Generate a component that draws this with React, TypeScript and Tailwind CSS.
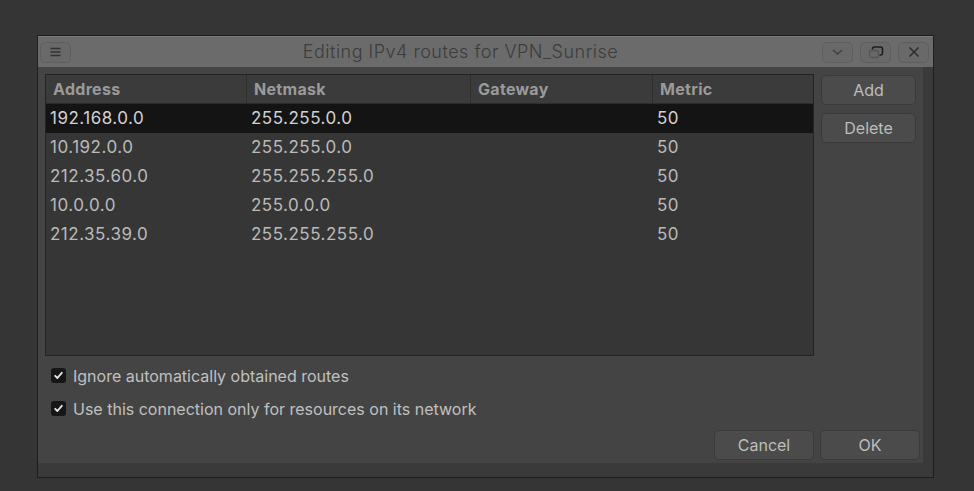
import React from "react";

const rows = [
  ["192.168.0.0", "255.255.0.0", "", "50"],
  ["10.192.0.0", "255.255.0.0", "", "50"],
  ["212.35.60.0", "255.255.255.0", "", "50"],
  ["10.0.0.0", "255.0.0.0", "", "50"],
  ["212.35.39.0", "255.255.255.0", "", "50"],
];

const cols = ["w-[201px]", "w-[224px]", "w-[182px]", "flex-1"];

function Check() {
  return (
    <div className="w-[15px] h-[15px] rounded-[3px] bg-[#161616] flex items-center justify-center">
      <svg width="11" height="11" viewBox="0 0 11 11">
        <path d="M2.2 5.8 L4.4 8 L8.8 2.8" fill="none" stroke="#e8e8e8" strokeWidth="1.8" strokeLinecap="round" strokeLinejoin="round" />
      </svg>
    </div>
  );
}

function Btn({ children, w }: { children: React.ReactNode; w: string }) {
  return (
    <div className={`${w} h-[30px] rounded-[5px] bg-[#4b4b4b] border border-[#3a3a3a] flex items-center justify-center text-[16px] text-[#bdbdbd]`}>
      {children}
    </div>
  );
}

function TBtn({ children }: { children: React.ReactNode }) {
  return (
    <div className="w-[31px] h-[21px] rounded-[5px] border border-[#5e5e5e] bg-[#696969] flex items-center justify-center">
      {children}
    </div>
  );
}

export default function App() {
  return (
    <div
      className="w-[974px] h-[491px] bg-[#353535] pt-[35px] pl-[37px]"
      style={{ fontFamily: "Inter, 'Noto Sans', sans-serif" }}
    >
      <div className="w-[897px] h-[443px] border border-[#1e1e1e] bg-[#3a3a3a] flex flex-col">
        {/* title bar */}
        <div className="h-[31px] bg-[#6b6b6b] border-t border-[#7a7a7a] flex items-center px-[2px] relative">
          <TBtn>
            <svg width="13" height="10" viewBox="0 0 13 10">
              <path d="M1.5 1.5H11.5M1.5 5H11.5M1.5 8.5H11.5" stroke="#333" strokeWidth="1.6" />
            </svg>
          </TBtn>
          <div className="flex-1 text-center text-[18px] tracking-[0.5px] text-[#3c3c3c] -mt-[1px] ml-[28px] font-light">
            Editing IPv4 routes for VPN_Sunrise
          </div>
          <div className="flex gap-[7px] mr-[2px]">
            <TBtn>
              <svg width="13" height="8" viewBox="0 0 13 8">
                <path d="M2 2L6.5 6L11 2" fill="none" stroke="#3e3e3e" strokeWidth="1.4" />
              </svg>
            </TBtn>
            <TBtn>
              <svg width="16" height="13" viewBox="0 0 16 13">
                <rect x="1.5" y="4.5" width="9" height="7" rx="2" fill="none" stroke="#555" strokeWidth="1.3" />
                <path d="M4.5 3.5 V3 a2 2 0 0 1 2 -2 H12.5 a2 2 0 0 1 2 2 V7 a2 2 0 0 1 -2 2 H11.5" fill="none" stroke="#1e1e1e" strokeWidth="1.6" />
              </svg>
            </TBtn>
            <TBtn>
              <svg width="12" height="12" viewBox="0 0 12 12">
                <path d="M1.5 1.5L10.5 10.5M10.5 1.5L1.5 10.5" stroke="#2e2e2e" strokeWidth="1.6" />
              </svg>
            </TBtn>
          </div>
        </div>
        {/* body */}
        <div className="w-[885px] h-[396px] bg-[#444444] flex flex-col">
          <div className="flex mt-[7px] ml-[7px] gap-[7px]">
            <div className="w-[769px] h-[282px] border border-[#242424] bg-[#363636] flex flex-col">
              <div className="h-[29px] flex bg-[#3b3b3b] border-b border-[#2c2c2c] text-[16px] font-bold tracking-[0.3px] text-[#9a9a9a]">
                {["Address", "Netmask", "Gateway", "Metric"].map((h, i) => (
                  <div
                    key={h}
                    className={`${cols[i]} flex items-center pl-[7px] ${i < 3 ? "border-r border-[#2f2f2f]" : ""}`}
                  >
                    {h}
                  </div>
                ))}
              </div>
              {rows.map((r, ri) => (
                <div
                  key={ri}
                  className={`h-[29px] flex text-[17px] tracking-[0.5px] pt-[1px] ${ri === 0 ? "bg-[#141414] text-[#d2d2d2]" : "text-[#bababa]"}`}
                >
                  {r.map((c, ci) => (
                    <div key={ci} className={`${cols[ci]} flex items-center pl-[4px]`}>
                      {c}
                    </div>
                  ))}
                </div>
              ))}
            </div>
            <div className="flex flex-col gap-[8px] pt-[1px]">
              <Btn w="w-[95px]">Add</Btn>
              <Btn w="w-[95px]">Delete</Btn>
            </div>
          </div>
          <div className="flex items-center gap-[7px] ml-[13px] mt-[11px] h-[17px] text-[16px] text-[#c0c0c0]">
            <Check />
            <span>Ignore automatically obtained routes</span>
          </div>
          <div className="flex items-center gap-[7px] ml-[13px] mt-[16px] h-[17px] text-[16px] text-[#c0c0c0]">
            <Check />
            <span>Use this connection only for resources on its network</span>
          </div>
          <div className="flex justify-end gap-[6px] mr-[3px] mt-[13px]">
            <Btn w="w-[100px]">Cancel</Btn>
            <Btn w="w-[100px]">OK</Btn>
          </div>
        </div>
      </div>
    </div>
  );
}
